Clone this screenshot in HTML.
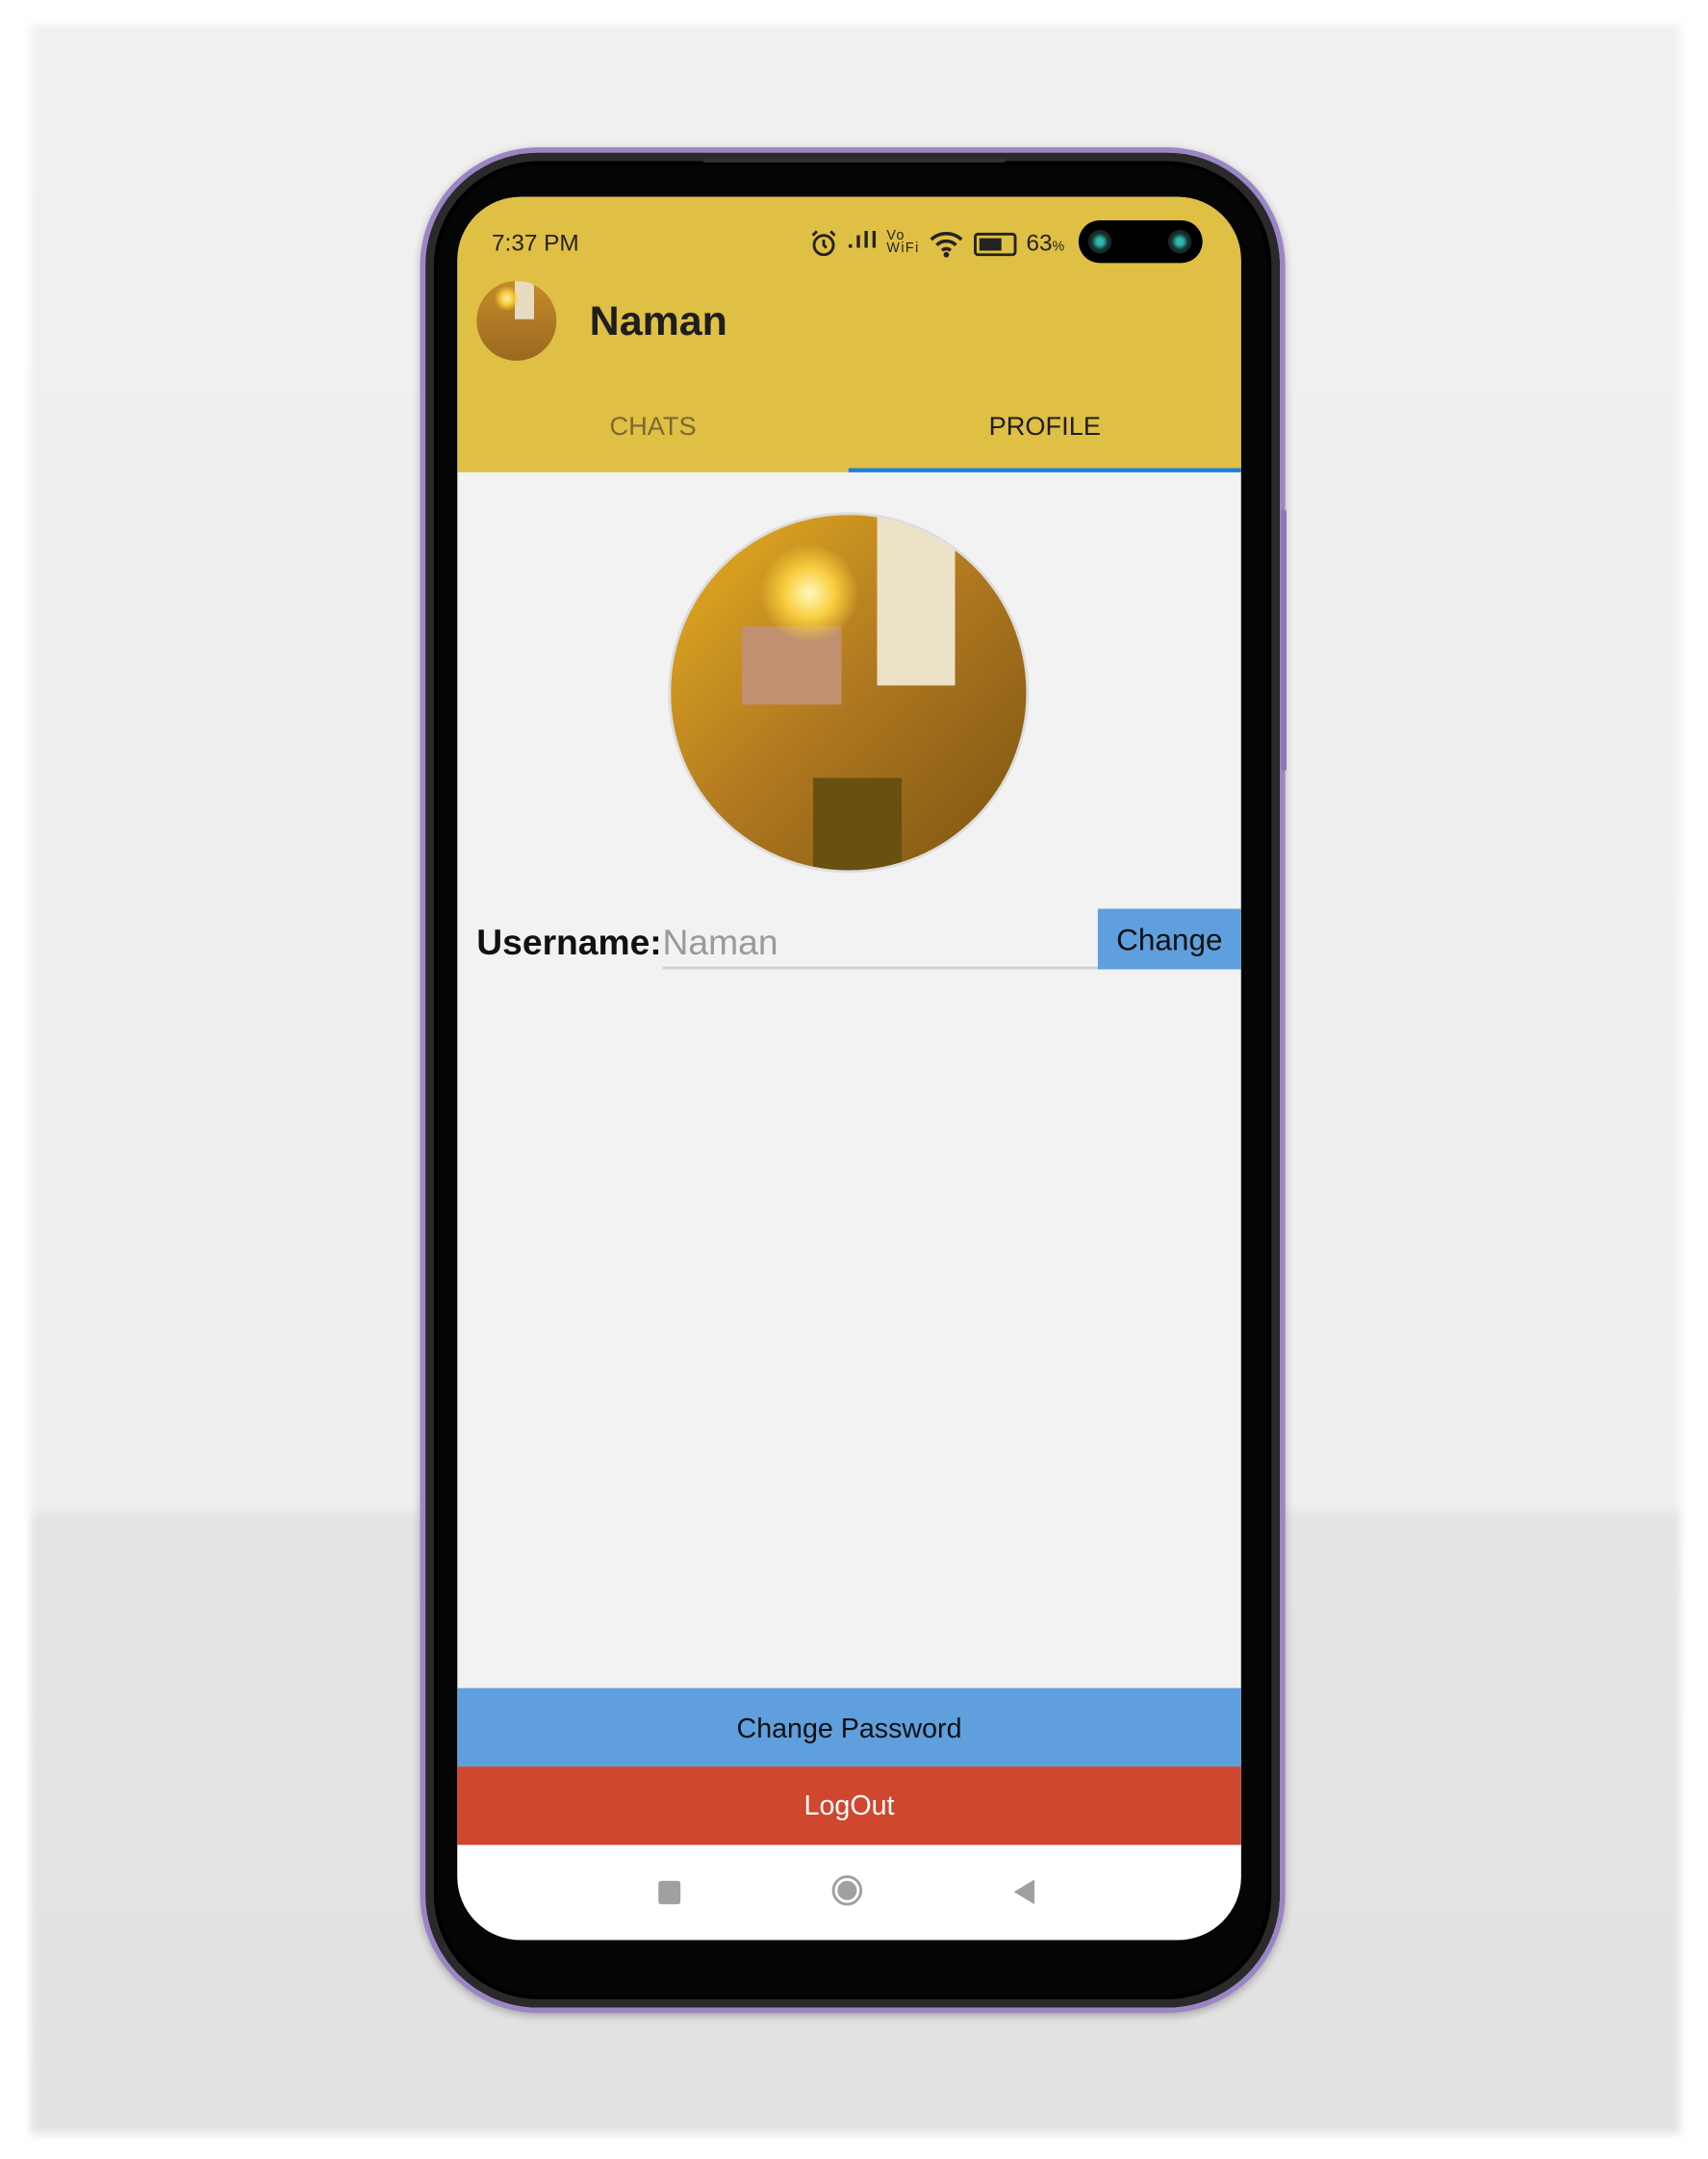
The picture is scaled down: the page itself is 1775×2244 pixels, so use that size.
<!DOCTYPE html>
<html><head><meta charset="utf-8"><style>
html,body{margin:0;padding:0;width:1775px;height:2244px;overflow:hidden;background:#fff;font-family:"Liberation Sans",Roboto,sans-serif}
#w{position:absolute;left:0;top:0;width:1240px;height:1568px;transform:scale(1.4315,1.4311);transform-origin:0 0}
.bg{position:absolute;left:22px;top:18px;width:1198px;height:1532px;background:linear-gradient(#f0f0f0 0,#efefef 1075px,#e4e4e4 1085px,#e2e2e2 100%);filter:blur(3px)}
.phone{position:absolute;left:305px;top:107px;width:628px;height:1355px;border-radius:86px;background:#9a86c4;box-shadow:0 2px 6px rgba(0,0,0,.25)}
.bez{position:absolute;left:4px;top:4px;right:4px;bottom:4px;border-radius:82px;background:#050505;box-shadow:inset 0 0 0 6px #2a2a2a,inset 0 0 0 9px #000}
.scr{position:absolute;left:332px;top:143px;width:569px;height:1266px;border-radius:46px;overflow:hidden;background:#f2f2f2}
.hdr{position:absolute;left:0;top:0;width:569px;height:200px;background:#e0bf45}
.t{position:absolute;white-space:nowrap}
.grid{background:
radial-gradient(circle at 38% 22%,#fff6b0 0,#f7c93a 8%,transparent 16%),
linear-gradient(90deg,transparent 48%,#e8dcc0 48%,#e8dcc0 72%,transparent 72%) 0 0/100% 48% no-repeat,
linear-gradient(#c58a2a,#9a6a20);}
</style></head><body><div id="w">
<div class="bg"></div>
<div class="phone"><div class="bez"></div></div>
<div style="position:absolute;left:510px;top:115px;width:220px;height:3px;background:#333;border-radius:2px"></div>
<div class="scr">
 <div class="hdr"></div>
 <div class="t" style="left:25px;top:24px;font-size:17px;color:#222">7:37 PM</div>
 <svg style="position:absolute;left:256px;top:24px" width="20" height="20" viewBox="0 0 20 20"><circle cx="10" cy="11" r="7" stroke="#222" stroke-width="2" fill="none"/><path d="M10 7v4l2 2M2 4l3-3M18 4l-3-3" stroke="#222" stroke-width="2" fill="none"/></svg>
 <div class="t" style="left:283px;top:22px;font-size:17px;color:#222;letter-spacing:1px"><b>.ıll</b> <span style="font-size:10px;line-height:9px;display:inline-block;vertical-align:middle">Vo<br>WiFi</span></div>
 <svg style="position:absolute;left:342px;top:24px" width="26" height="20" viewBox="0 0 26 20"><path d="M2 7a16 16 0 0 1 22 0M6 11a10 10 0 0 1 14 0M10 15a4 4 0 0 1 6 0" stroke="#222" stroke-width="2.5" fill="none"/><circle cx="13" cy="18" r="2" fill="#222"/></svg>
 <div style="position:absolute;left:375px;top:26px;width:27px;height:13px;border:2px solid #222;border-radius:3px"><div style="margin:2px;width:16px;height:9px;background:#222"></div></div>
 <div class="t" style="left:413px;top:24px;font-size:17px;color:#222">63<span style="font-size:10px">%</span></div>
 <div style="position:absolute;left:451px;top:17px;width:90px;height:31px;border-radius:16px;background:#000"></div>
 <div style="position:absolute;left:458px;top:24px;width:17px;height:17px;border-radius:50%;background:radial-gradient(#2fb9a9 20%,#133 50%,#222 70%)"></div>
 <div style="position:absolute;left:516px;top:24px;width:17px;height:17px;border-radius:50%;background:radial-gradient(#2fb9a9 20%,#133 50%,#222 70%)"></div>
 <div class="grid" style="position:absolute;left:14px;top:61px;width:58px;height:58px;border-radius:50%"></div>
 <div class="t" style="left:96px;top:74px;font-size:30px;font-weight:bold;color:#1e1e1e">Naman</div>
 <div class="t" style="left:0;width:284px;text-align:center;top:157px;font-size:19px;color:#7a6a30">CHATS</div>
 <div class="t" style="left:284px;width:285px;text-align:center;top:157px;font-size:19px;color:#1e1e1e">PROFILE</div>
 <div style="position:absolute;left:284px;top:197px;width:285px;height:3px;background:#1e7ee0"></div>
 <div class="grid" style="position:absolute;left:155px;top:231px;width:258px;height:258px;border-radius:50%;box-shadow:0 0 0 2px #ddd;background:
 radial-gradient(circle at 39% 22%,#fff8c0 0,#f9cf40 7%,transparent 14%),
 linear-gradient(90deg,transparent 58%,#ece2c8 58%,#ece2c8 80%,transparent 80%) 0 0/100% 48% no-repeat,
 linear-gradient(90deg,transparent 20%,#c09070 20%,#c09070 48%,transparent 48%) 0 40%/100% 22% no-repeat,
 linear-gradient(90deg,transparent 40%,#6a5010 40%,#6a5010 65%,transparent 65%) 0 100%/100% 26% no-repeat,
 linear-gradient(135deg,#e8b020,#b07820 50%,#7a5410)"></div>
 <div class="t" style="left:14px;top:526px;font-size:26px;font-weight:bold;color:#111">Username: </div>
 <div class="t" style="left:149px;top:526px;font-size:26px;color:#9a9a9a">Naman</div>
 <div style="position:absolute;left:149px;top:559px;width:316px;height:2px;background:#d0d0d0"></div>
 <div style="position:absolute;left:465px;top:517px;width:104px;height:44px;background:#5f9fdd;color:#111;font-size:22px;text-align:center;line-height:46px">Change</div>
 <div style="position:absolute;left:0;top:1083px;width:569px;height:57px;background:#5f9fdd;color:#111;font-size:20px;text-align:center;line-height:60px">Change Password</div>
 <div style="position:absolute;left:0;top:1140px;width:569px;height:57px;background:#d0472f;color:#fff;font-size:20px;text-align:center;line-height:58px">LogOut</div>
 <div style="position:absolute;left:0;top:1197px;width:569px;height:69px;background:#fff"></div>
 <div style="position:absolute;left:146px;top:1223px;width:16px;height:17px;background:#a0a0a0;border-radius:2px"></div>
 <div style="position:absolute;left:272px;top:1219px;width:22px;height:22px;border-radius:50%;border:2px solid #a0a0a0;box-sizing:border-box"><div style="margin:2px;width:14px;height:14px;border-radius:50%;background:#a0a0a0"></div></div>
 <div style="position:absolute;left:404px;top:1222px;width:0;height:0;border-top:9px solid transparent;border-bottom:9px solid transparent;border-right:15px solid #a0a0a0"></div>
</div>
<div style="position:absolute;left:930px;top:370px;width:4px;height:190px;background:#8c78b8;border-radius:2px"></div>
</div></body></html>
